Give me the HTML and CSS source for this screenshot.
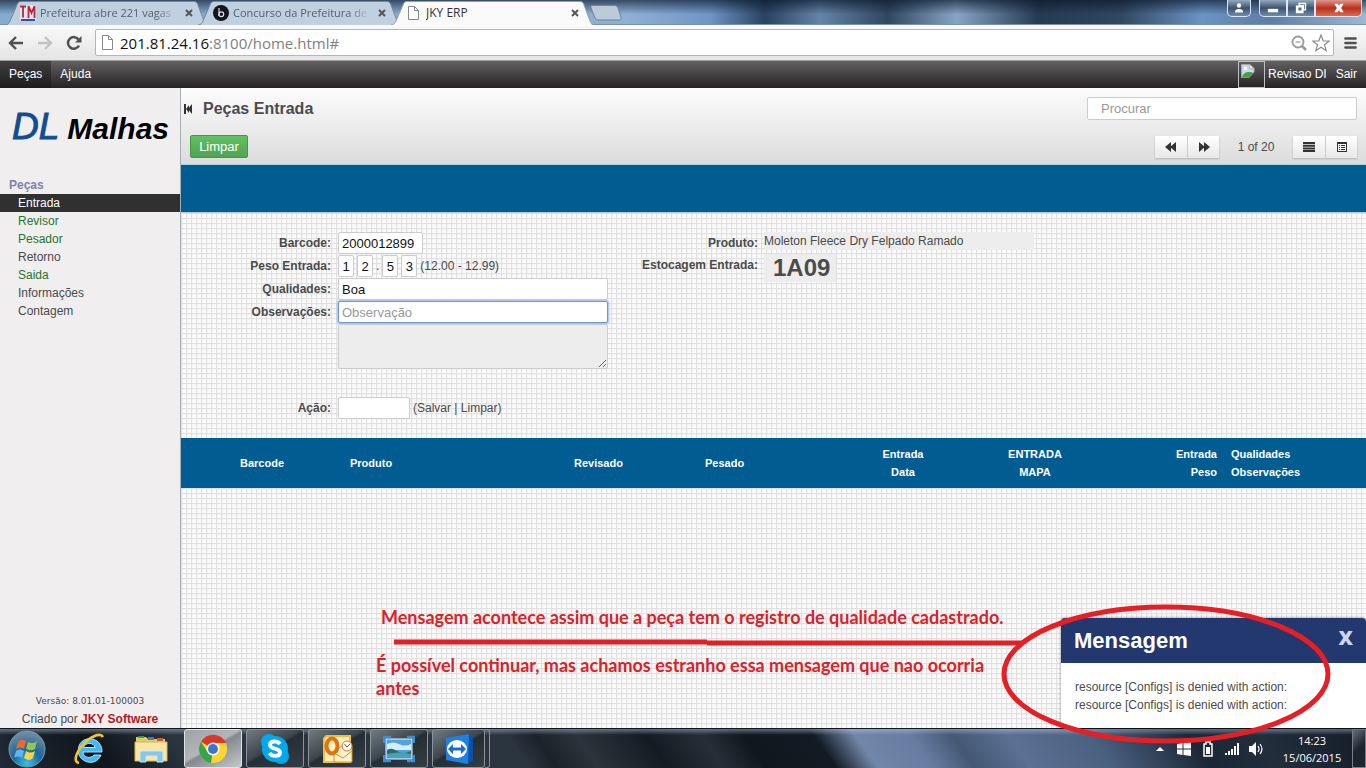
FILE: index.html
```html
<!DOCTYPE html>
<html lang="pt-BR">
<head>
<meta charset="utf-8">
<title>JKY ERP</title>
<link rel="stylesheet" href="styles.css">
</head>
<body>
<header class="tabstrip">
  <div class="tabs">
    <div class="tab">
      <svg class="tab-shape" viewBox="0 0 202 24" preserveAspectRatio="none"><path d="M0 24C3 24 4 22 5 20L12 4C13 1 14 .5 17 .5H188C191 .5 192 1 193 4L199 20C200 22 201 24 202 24"/></svg>
      <svg class="favicon" viewBox="0 0 16 16"><rect width="16" height="16" fill="#dfe6f0"/><path d="M0 1.500H6M3 1.500V12.500M8.500 13V1L11.500 8L14.500 1V13" stroke="#b5283c" stroke-width="1.800" fill="none"/><path d="M1 15H15" stroke="#3c4a9e" stroke-width="2"/></svg>
      <span class="tab-title fade">Prefeitura abre 221 vagas</span>
      <button class="tab-close" aria-label="Fechar guia"><svg viewBox="0 0 8 8"><path d="M1 1L7 7M7 1L1 7"/></svg></button>
    </div>
    <div class="tab">
      <svg class="tab-shape" viewBox="0 0 202 24" preserveAspectRatio="none"><path d="M0 24C3 24 4 22 5 20L12 4C13 1 14 .5 17 .5H188C191 .5 192 1 193 4L199 20C200 22 201 24 202 24"/></svg>
      <svg class="favicon" viewBox="0 0 16 16"><circle cx="8" cy="8" r="8" fill="#11151c"/><path d="M6 3V11" stroke="#dde" stroke-width="1.200"/><circle cx="8.300" cy="9.200" r="2.400" stroke="#dde" stroke-width="1.200" fill="none"/></svg>
      <span class="tab-title fade">Concurso da Prefeitura de</span>
      <button class="tab-close" aria-label="Fechar guia"><svg viewBox="0 0 8 8"><path d="M1 1L7 7M7 1L1 7"/></svg></button>
    </div>
    <div class="tab active">
      <svg class="tab-shape" viewBox="0 0 202 24" preserveAspectRatio="none"><path d="M0 24C3 24 4 22 5 20L12 4C13 1 14 .5 17 .5H188C191 .5 192 1 193 4L199 20C200 22 201 24 202 24"/></svg>
      <svg class="favicon" viewBox="0 0 16 16"><path d="M2.500 1.500H8.500L12.500 5.500V14.500H2.500ZM8.500 1.500V5.500H12.500" fill="#fff" stroke="#888"/></svg>
      <span class="tab-title">JKY ERP</span>
      <button class="tab-close" aria-label="Fechar guia"><svg viewBox="0 0 8 8"><path d="M1 1L7 7M7 1L1 7"/></svg></button>
    </div>
    <button class="new-tab" aria-label="Nova guia"><svg viewBox="0 0 32 16"><path d="M3 .5H24C26 .5 27 1 28 3L31 12C31.500 14 31 15 29 15H9C7 15 6 14.500 5 13L1 3C.5 1 1 .5 3 .5Z" fill="#bccbda" stroke="#6f8299"/></svg></button>
  </div>
  <div class="window-buttons">
    <button class="win-btn user" aria-label="Usuário"><svg viewBox="0 0 12 12"><circle cx="6" cy="3.500" r="2.200"/><path d="M2 10.500C2 7.500 4 7 6 7S10 7.500 10 10.500Z"/></svg></button>
    <div class="win-group">
      <button class="win-btn" aria-label="Minimizar"><svg viewBox="0 0 14 14"><rect x="1" y="8" width="12" height="4"/></svg></button>
      <button class="win-btn" aria-label="Restaurar"><svg viewBox="0 0 14 14"><path d="M4 1H13V10H10V13H1V4H4Z"/><path d="M4 6.500H7.500V10H4ZM5.500 2.500H11.500V8.500H10.500V3.500H5.500Z" fill="#566b88"/></svg></button>
      <button class="win-btn close" aria-label="Fechar"><svg viewBox="0 0 14 14"><path d="M1.500 2H5.500L7 4.500L8.500 2H12.500L9.500 7L12.500 12H8.500L7 9.500L5.500 12H1.500L4.500 7Z"/></svg></button>
    </div>
  </div>
</header>

<div class="toolbar">
  <button class="tool" aria-label="Voltar"><svg viewBox="0 0 16 16"><path d="M15 8H2M8 2L2 8L8 14" fill="none" stroke="#505050" stroke-width="2.400"/></svg></button>
  <button class="tool" aria-label="Avançar"><svg viewBox="0 0 16 16"><path d="M1 8H14M8 2L14 8L8 14" fill="none" stroke="#c3c3c3" stroke-width="2.400"/></svg></button>
  <button class="tool" aria-label="Recarregar"><svg viewBox="0 0 16 16"><path d="M13 10.500A5.800 5.800 0 1 1 12.500 4.500" fill="none" stroke="#505050" stroke-width="2.500"/><path d="M15.500 1V7.500H9Z" fill="#505050"/></svg></button>
  <div class="omnibox">
    <svg class="page-icon" viewBox="0 0 16 16"><path d="M2.500 .5H8.500L12.500 4.500V14.500H2.500ZM8.500 .5V4.500H12.500" fill="#fff" stroke="#888"/></svg>
    <div class="url"><span class="host">201.81.24.16</span>:8100/home.html#</div>
    <svg class="omni-icon" viewBox="0 0 16 16"><circle cx="7" cy="7" r="5.500" fill="none" stroke="#999" stroke-width="1.800"/><path d="M11 11L15 15" stroke="#999" stroke-width="2.500"/><path d="M4.500 7H9.500" stroke="#999" stroke-width="1.200"/></svg>
    <svg class="omni-star" viewBox="0 0 18 18"><path d="M9 1L11.200 6.800L17.300 7L12.500 10.800L14.200 16.700L9 13.300L3.800 16.700L5.500 10.800L.7 7L6.800 6.800Z" fill="#fff" stroke="#8b8b8b" stroke-width="1.200"/></svg>
  </div>
  <button class="menu" aria-label="Menu"><svg viewBox="0 0 14 14"><path d="M2 2.500H12M2 7H12M2 11.500H12" stroke="#505050" stroke-width="2.700" stroke-linecap="round"/></svg></button>
</div>

<nav class="topnav">
  <a class="topnav-item current" href="#">Peças</a>
  <a class="topnav-item" href="#">Ajuda</a>
  <div class="user-area">
    <span class="avatar"><svg viewBox="0 0 16 16"><path d="M.5 .5H10L15 5.500V9L9 15.500H.5Z" fill="#c5d9f2" stroke="#a9a9a9"/><path d="M10 .5V5.500H15Z" fill="#fff" stroke="#a9a9a9"/><circle cx="5" cy="5" r="2" fill="#fff"/><path d="M1 15C3 9 8 8 14 10L9 15.500Z" fill="#4b9c3c"/></svg></span>
    <a href="#">Revisao DI</a>
    <a href="#">Sair</a>
  </div>
</nav>

<div class="app">
  <aside class="sidebar">
    <div class="logo"><span class="logo-dl">DL</span><span class="logo-name">Malhas</span></div>
    <h2 class="side-title">Peças</h2>
    <ul class="side-menu">
      <li><a class="selected" href="#">Entrada</a></li>
      <li><a class="green" href="#">Revisor</a></li>
      <li><a class="green" href="#">Pesador</a></li>
      <li><a href="#">Retorno</a></li>
      <li><a class="green" href="#">Saida</a></li>
      <li><a href="#">Informações</a></li>
      <li><a href="#">Contagem</a></li>
    </ul>
    <div class="side-footer">
      <div class="version">Versão: 8.01.01-100003</div>
      <div>Criado por <a href="#">JKY Software</a></div>
    </div>
  </aside>

  <main class="content">
    <section class="page-head">
      <div class="head-row">
        <svg class="collapse" viewBox="0 0 8 10"><path d="M0 0H2V10H0ZM2 5L5 1V9ZM4 5L8 0V10Z" fill="#333"/></svg>
        <h1>Peças Entrada</h1>
        <input class="search" type="text" placeholder="Procurar" aria-label="Procurar">
      </div>
      <div class="head-row second">
        <button class="btn-clear">Limpar</button>
        <div class="pager">
          <div class="btn-group">
            <button aria-label="Anterior"><svg viewBox="0 0 12 10"><path d="M6 0V10L0 5ZM11 0V10L5 5Z"/></svg></button>
            <button aria-label="Próximo"><svg viewBox="0 0 12 10"><path d="M1 0V10L7 5ZM6 0V10L12 5Z"/></svg></button>
          </div>
          <span class="count">1 of 20</span>
          <div class="btn-group">
            <button aria-label="Lista"><svg viewBox="0 0 12 10"><path d="M0 0H12V2H0ZM0 2.700H12V4.700H0ZM0 5.400H12V7.400H0ZM0 8H12V10H0Z"/></svg></button>
            <button aria-label="Formulário"><svg viewBox="0 0 12 10"><path d="M1 0H11V10H1ZM2 2V9H10V2Z" fill-rule="evenodd"/><path d="M3 3H4V4H3ZM5 3H9V4H5ZM3 5H4V6H3ZM5 5H9V6H5ZM3 7H4V8H3ZM5 7H9V8H5Z"/></svg></button>
          </div>
        </div>
      </div>
    </section>
    <div class="band"></div>

    <form class="entry">
      <div class="fields">
        <label for="barcode">Barcode:</label>
        <div class="field"><input id="barcode" class="w-code" type="text" value="2000012899"></div>
        <label for="peso">Peso Entrada:</label>
        <div class="field digits"><input id="peso" type="text" value="1"><input type="text" value="2" aria-label="Peso, unidade"><span>.</span><input type="text" value="5" aria-label="Peso, décimo"><input type="text" value="3" aria-label="Peso, centésimo"><span>(12.00 - 12.99)</span></div>
        <label for="qualidades">Qualidades:</label>
        <div class="field"><input id="qualidades" class="w-full" type="text" value="Boa"></div>
        <label for="obs">Observações:</label>
        <div class="field"><input id="obs" class="w-full focused" type="text" placeholder="Observação"></div>
        <textarea class="notes" readonly aria-label="Histórico de observações"></textarea>
        <label class="action" for="acao">Ação:</label>
        <div class="field action"><input id="acao" class="w-action" type="text"><span>(Salvar | Limpar)</span></div>
      </div>
      <div class="info">
        <span class="info-label">Produto:</span>
        <output class="product">Moleton Fleece Dry Felpado Ramado</output>
        <span class="info-label">Estocagem Entrada:</span>
        <output class="storage">1A09</output>
      </div>
    </form>

    <table class="grid">
      <colgroup><col class="c-pad"><col class="c-code"><col class="c-product"><col class="c-rev"><col class="c-pes"><col class="c-date"><col class="c-date"><col class="c-weight"><col></colgroup>
      <thead>
        <tr>
          <td></td>
          <th>Barcode</th>
          <th>Produto</th>
          <th>Revisado</th>
          <th>Pesado</th>
          <th class="center">Entrada<br>Data</th>
          <th class="center">ENTRADA<br>MAPA</th>
          <th class="right">Entrada<br>Peso</th>
          <th>Qualidades<br>Observações</th>
        </tr>
      </thead>
    </table>
  </main>

  <section class="message">
    <header><h2>Mensagem</h2><button aria-label="Fechar mensagem">X</button></header>
    <p>resource [Configs] is denied with action:<br>resource [Configs] is denied with action:</p>
  </section>

  <p class="note note-top">Mensagem acontece assim que a peça tem o registro de qualidade cadastrado.</p>
  <p class="note note-bottom">É possível continuar, mas achamos estranho essa mensagem que nao ocorria antes</p>
  <svg class="marker" viewBox="0 0 946 146"><path d="M4 42H317M317 43H632" /><ellipse cx="776" cy="74" rx="162" ry="67"/></svg>
</div>

<footer class="taskbar">
  <button class="start" aria-label="Iniciar"><svg viewBox="0 0 38 38">
    <defs><radialGradient id="orb" cx=".5" cy=".9" r=".9"><stop offset="0" stop-color="#3cc0ee"/><stop offset=".45" stop-color="#1c6799"/><stop offset="1" stop-color="#7690a6"/></radialGradient></defs>
    <circle cx="19" cy="19" r="18" fill="url(#orb)" stroke="#8097a8"/>
    <path d="M10 12C13 9 16 10 18 11L16 19C13 17 11 17 8 19Z" fill="#ed6830"/><path d="M20 12C23 13 26 14 29 11L27 19C24 21 21 20 18 19Z" fill="#98c545"/><path d="M8 21C11 19 13 19 16 21L14 28C11 26 9 26 6 28Z" fill="#62b6ec"/><path d="M18 21C21 23 24 23 27 21L25 28C22 31 19 30 16 28Z" fill="#ffd147"/></svg></button>
  <button class="pin" aria-label="Internet Explorer"><svg viewBox="0 0 32 32"><path d="M29 19H10C10 25 18 26 21 22H28C25 29 18 31 12 28C6 25 4 19 6 13C9 5 18 4 24 8C28 11 29 15 29 19ZM10.500 14.500H22C21 9 12 9 10.500 14.500Z" fill="#46b7f0" stroke="#a7e4ff"/><path d="M6 30C0 29 3 20 9 13C16 4 27 -1 30 4" fill="none" stroke="#f4c42e" stroke-width="2.600"/></svg></button>
  <button class="pin" aria-label="Explorador"><svg viewBox="0 0 34 32"><path d="M2 4H12L14 6H31V28H2Z" fill="#e4c868"/><path d="M4 3H10V5H4Z" fill="#2b9d57"/><path d="M14 4H20V7H14Z" fill="#3b7cc3"/><path d="M23 5H29V8H23Z" fill="#cb5a3a"/><path d="M1 9H33V28H1Z" fill="#f8e7a3" stroke="#d4b65b"/><path d="M6 29V19Q6 18 8 18H27Q29 18 29 19V29H23V23H12V29Z" fill="#8ac7e6" stroke="#c3e8f8"/></svg></button>
  <button class="task running" aria-label="Chrome"><svg viewBox="0 0 32 32"><circle cx="16" cy="16" r="14" fill="#fcd734"/><path d="M16 16L4 8.800A14 14 0 0 1 29 10H16Z" fill="#d9392b"/><path d="M16 16L14 30A14 14 0 0 1 4 8.800L10.500 19Q12 22 16 22Z" fill="#37a34a"/><circle cx="16" cy="16" r="6.500" fill="#fff"/><circle cx="16" cy="16" r="5" fill="#3b78cd"/></svg></button>
  <button class="task" aria-label="Skype"><svg viewBox="0 0 32 32"><circle cx="16" cy="16" r="13" fill="#00a9ec"/><circle cx="10" cy="9" r="8" fill="#00a9ec"/><circle cx="22" cy="23" r="8" fill="#00a9ec"/><path d="M21 11C18 7 11 8 11 12C11 17 21 14 21 19.500C21 24 13 24 10.500 20" fill="none" stroke="#fff" stroke-width="3.800"/></svg></button>
  <button class="task" aria-label="Outlook"><svg viewBox="0 0 32 32"><path d="M5 2H30V30H2V5Z" fill="#f5bd3e"/><path d="M6 4H28V28H4V6Z" fill="#fff1bd"/><path d="M13 19L21 13H31V29H13Z" fill="#fff3cf" stroke="#d9901a"/><path d="M13 20L22 25L31 18" fill="none" stroke="#d9901a"/><ellipse cx="11" cy="13" rx="5.500" ry="7.500" fill="none" stroke="#db7414" stroke-width="4"/><circle cx="26" cy="13" r="5" fill="#fff" stroke="#cf731c"/><path d="M23.500 11L26 14L29 11" fill="none" stroke="#b43c17"/></svg></button>
  <button class="task" aria-label="Imagens"><svg viewBox="0 0 32 28"><rect x="3" y="4" width="26" height="20" fill="#4da3e4" stroke="#e9f7ff"/><path d="M4 9Q10 6 16 9T28 9V15H4Z" fill="#d5edfb"/><path d="M4 15Q8 12 14 16T28 16V23H4Z" fill="#2c6b60"/><path d="M4 19Q16 16 28 19V23H4Z" fill="#4ba0b5"/><path d="M1 8V2H8M24 2H31V8M31 20V26H24M8 26H1V20" fill="none" stroke="#3c8ed4" stroke-width="2.500"/></svg></button>
  <button class="task narrow" aria-label="TeamViewer"><svg viewBox="0 0 32 32"><path d="M3 5L26 1L30 4V27L24 31L3 27Z" fill="#2080de"/><path d="M26 1L30 4V27L25 31Z" fill="#0752a7"/><ellipse cx="14" cy="16" rx="10" ry="9" fill="#fff"/><path d="M5 16L10 11V14.500H18V11L23 16L18 21V17.500H10V21Z" fill="#176bd0"/></svg></button>
  <span class="stack"></span>
  <div class="tray">
    <svg class="arrow" viewBox="0 0 8 4"><path d="M0 4L4 0L8 4Z" fill="#fff"/></svg>
    <svg viewBox="0 0 16 16"><path d="M1 3L6.500 2V7.500H1ZM7.500 2L15 1V7.500H7.500ZM1 8.500H6.500V14L1 13ZM7.500 8.500H15V15L7.500 14Z" fill="#fff"/></svg>
    <svg viewBox="0 0 16 16"><path d="M6 1H10V3H12V15H4V3H6Z" fill="none" stroke="#fff" stroke-width="1.500"/><path d="M6 6H10V13H6Z" fill="#fff"/></svg>
    <svg viewBox="0 0 16 16"><path d="M1 12H3V14H1ZM4 10H6V14H4ZM7 8H9V14H7ZM10 5H12V14H10ZM13 2H15V14H13Z" fill="#fff"/></svg>
    <svg viewBox="0 0 16 16"><path d="M1 5H4L8 1V15L4 11H1Z" fill="#fff"/><path d="M10 5Q12 8 10 11M12 3Q16 8 12 13" fill="none" stroke="#fff" stroke-width="1.200"/></svg>
    <time>14:23<br>15/06/2015</time>
    <button class="show-desktop" aria-label="Mostrar área de trabalho"></button>
  </div>
</footer>
</body>
</html>
```
FILE: styles.css
```css
* { box-sizing: border-box; }

body {
  margin: 0;
  min-height: 100vh;
  display: flex;
  flex-direction: column;
  font: 12px/18px "Liberation Sans", Arial, sans-serif;
  color: #4b4b4b;
  background: #f0eeef;
}

h1, h2, p, ul { margin: 0; padding: 0; }
a { color: inherit; text-decoration: none; }
button { padding: 0; border: 0; background: none; font: inherit; color: inherit; }
svg { display: block; flex: none; }

/* Tab strip */
.tabstrip {
  display: flex;
  justify-content: space-between;
  align-items: flex-start;
  height: 25px;
  padding: 0 4px 0 5px;
  background:
    linear-gradient(180deg, rgba(8, 20, 40, .65), rgba(8, 20, 40, 0) 60%),
    linear-gradient(90deg, #84abd0 0, #8fb0d4 46%, #6e95c4 52%, #29425f 56%, #6484a8 60%, #30475f 65%, #87a5c4 70%, #263a52 76%, #31475f 82%, #6a94c4 88%, #5d7ea6 93%, #9cb8d4 100%);
  border-bottom: 1px solid #7e93ab;
}
.tabs { display: flex; align-items: flex-end; height: 25px; }
.tab {
  position: relative;
  display: flex;
  align-items: center;
  width: 202px;
  height: 24px;
  padding: 0 14px 0 15px;
  font: 12px/18px "Open Sans", "Noto Sans", sans-serif;
  color: #55606c;
}
.tab + .tab { margin-left: -9px; }
.tab-shape { position: absolute; inset: 0; width: 100%; height: 100%; }
.tab-shape path { fill: #c0d0e1; stroke: #74879c; }
.tab.active { z-index: 1; color: #333; }
.tab.active .tab-shape path { fill: #fafafa; stroke: #93a0ad; }
.favicon, .tab-title, .tab-close { position: relative; }
.favicon { width: 16px; height: 16px; margin-right: 4px; }
.tab-title { flex: 1; overflow: hidden; white-space: nowrap; font-size: 11px; }
.active .tab-title { font-size: 12px; }
.tab-title.fade { -webkit-mask-image: linear-gradient(90deg, #000 85%, transparent); mask-image: linear-gradient(90deg, #000 85%, transparent); }
.tab-close { margin-left: 8px; }
.tab-close svg { width: 8px; height: 8px; stroke: #555; stroke-width: 2; }
.new-tab { align-self: center; margin-left: -3px; }
.new-tab svg { width: 32px; height: 16px; }

.window-buttons { display: flex; gap: 8px; }
.win-group { display: flex; }
.win-btn {
  display: flex;
  align-items: center;
  justify-content: center;
  width: 28px;
  height: 17px;
  border: 1px solid #dbe6f1;
  border-top: 0;
  background: linear-gradient(#93a9bf, #3e536d 50%, #6e8cad);
  fill: #fff;
}
.win-btn.user { width: 24px; border-radius: 0 0 5px 5px; }
.win-btn svg { width: 12px; height: 12px; }
.win-group .win-btn:first-child { border-radius: 0 0 0 5px; }
.win-btn.close { width: 47px; border-radius: 0 0 5px 0; background: linear-gradient(#dd978c, #b9301b 50%, #dc6a50); }

/* Browser toolbar */
.toolbar {
  display: flex;
  align-items: center;
  height: 36px;
  padding: 0 8px 0 8px;
  background: linear-gradient(#fafafa, #e4e4e4);
  border-bottom: 1px solid #a0a0a0;
}
.tool { width: 29px; }
.tool svg { width: 16px; height: 16px; }
.omnibox {
  flex: 1;
  display: flex;
  align-items: center;
  height: 27px;
  margin-right: 9px;
  padding: 0 3px 0 4px;
  background: #fff;
  border: 1px solid #b5b5b5;
  border-radius: 2px;
}
.page-icon { width: 16px; height: 16px; margin-right: 4px; }
.url { flex: 1; font: 15px/24px "Open Sans", "Noto Sans", sans-serif; color: #808080; }
.host { color: #111; }
.omni-icon { width: 16px; height: 16px; margin-right: 5px; }
.omni-star { width: 18px; height: 18px; }
.menu svg { width: 15px; height: 14px; }

/* Application bar */
.topnav {
  display: flex;
  height: 27px;
  background: linear-gradient(#636060, #252324);
  color: #fff;
  line-height: 26px;
}
.topnav-item { padding: 0 9px; }
.topnav-item.current { background: linear-gradient(#413f40, #1d1c1d); }
.user-area { display: flex; gap: 9px; margin-left: auto; padding-right: 9px; }
.avatar { width: 27px; height: 27px; margin-right: -6px; padding: 2px; border: 1px solid #c0c0c0; }
.avatar svg { width: 14px; height: 14px; }

/* Page frame */
.app { position: relative; flex: 1; display: flex; }
.sidebar {
  flex: none;
  display: flex;
  flex-direction: column;
  width: 181px;
  border-right: 1px solid #a5adb5;
}
.logo {
  display: flex;
  align-items: baseline;
  gap: 8px;
  height: 88px;
  padding: 15px 0 0 12px;
  font-family: "Liberation Sans", Arial, sans-serif;
  font-style: italic;
  line-height: 48px;
}
.logo-dl { font-size: 37px; color: #114c95; -webkit-text-stroke: 1px #114c95; }
.logo-name { font-size: 30px; font-weight: bold; color: #000; }
.side-title { padding-left: 9px; font-size: 12px; line-height: 18px; color: #8080ae; }
.side-menu { list-style: none; }
.side-menu a { display: block; padding-left: 18px; }
.side-menu .green { color: #28752b; }
.side-menu .selected { background: #303030; color: #fff; }
.side-footer { margin-top: auto; text-align: center; }
.side-footer a { font-weight: bold; color: #b51a20; }
.version { font: 9px/18px "DejaVu Sans", Verdana, sans-serif; }

.content {
  flex: 1;
  min-width: 0;
  background-color: #fbfbfb;
  background-image:
    linear-gradient(90deg, #e0e0e0 1px, transparent 1px),
    linear-gradient(#e0e0e0 1px, transparent 1px),
    linear-gradient(135deg, #f0f0f0, #fff);
  background-size: 5px 5px;
}
.page-head {
  height: 77px;
  padding: 9px 9px 0 3px;
  background: linear-gradient(#fcfcfc, #dcdcdc);
  border-bottom: 1px solid #a6d3e6;
}
.head-row { display: flex; align-items: center; height: 23px; }
.head-row.second { margin-top: 15px; padding-left: 6px; }
.collapse { width: 8px; height: 10px; margin-right: 11px; }
h1 { font-size: 16px; line-height: 23px; }
.search {
  width: 270px;
  height: 23px;
  margin-left: auto;
  padding: 0 13px;
  border: 1px solid #ccc;
  border-radius: 2px;
  font: 13px/18px "Liberation Sans", Arial, sans-serif;
}
::placeholder { color: #999; opacity: 1; }
.btn-clear {
  width: 58px;
  height: 23px;
  border: 1px solid #499249;
  border-radius: 2px;
  background: linear-gradient(#62c162, #51a351);
  color: #fff;
  font-size: 13px;
}
.pager { display: flex; align-items: center; margin-left: auto; }
.btn-group { display: flex; box-shadow: 0 1px 2px rgba(0, 0, 0, .2); }
.btn-group button {
  display: flex;
  align-items: center;
  justify-content: center;
  width: 32px;
  height: 22px;
  background: linear-gradient(#fff, #e8e8e8);
  fill: #333;
}
.btn-group button + button { border-left: 1px solid #ccc; }
.btn-group svg { width: 12px; height: 10px; }
.count { width: 74px; text-align: center; }
.band { height: 48px; background: #005c91; border-bottom: 1px solid #b9c4cb; }

/* Entry form */
.entry { display: flex; gap: 9px; height: 225px; padding: 19px 0 0; }
.fields { display: grid; grid-template-columns: 150px 270px; grid-auto-rows: max-content; column-gap: 7px; row-gap: 1px; }
.fields label, .info-label { font-weight: bold; text-align: right; line-height: 22px; white-space: nowrap; }
.field { display: flex; align-items: center; gap: 3px; height: 22px; }
.field input, .notes {
  height: 22px;
  padding: 0 3px;
  border: 1px solid #ccc;
  border-radius: 2px;
  background: #fff;
  font: 13px/18px "Liberation Sans", Arial, sans-serif;
  color: #111;
}
.field .w-code { width: 85px; }
.field .w-full { width: 100%; }
.field .w-action { width: 72px; }
.field .focused { border-color: #6f96d6; box-shadow: 0 0 2px 1px #9db9ea; }
.field.digits input { width: 16px; padding: 0; text-align: center; }
.notes { grid-column: 2; width: 100%; height: 45px; background: #ededed; resize: both; }
.action { margin-top: 27px; }
.info { display: grid; grid-template-columns: 141px 270px; grid-template-rows: 22px 28px; column-gap: 6px; }
.product { align-self: start; line-height: 18px; background: #ededed; }
.storage { width: 72px; padding: 0 9px; font-size: 24px; font-weight: bold; line-height: 28px; background: #ededed; }

/* Pieces table */
.grid {
  width: 100%;
  height: 50px;
  table-layout: fixed;
  border-collapse: collapse;
  background: #005c91;
  color: #fff;
  font-size: 11px;
  line-height: 18px;
}
.grid th { padding: 0 7px; text-align: left; }
.grid .center { text-align: center; }
.grid .right { text-align: right; }
.c-pad { width: 52px; }
.c-code { width: 110px; }
.c-product { width: 224px; }
.c-rev { width: 131px; }
.c-pes { width: 139px; }
.c-date { width: 132px; }
.c-weight { width: 123px; }

/* Message popup */
.message {
  position: absolute;
  right: 0;
  bottom: 0;
  width: 305px;
  height: 110px;
  border-radius: 4px 4px 0 0;
  background: #fff;
  box-shadow: 0 0 3px rgba(0, 0, 0, .5);
  overflow: hidden;
}
.message header { display: flex; justify-content: space-between; height: 45px; padding: 0 13px; background: #22386f; }
.message h2 { font-size: 22px; line-height: 45px; color: #fff; }
.message button { font: 800 20px/40px "Open Sans", sans-serif; color: #cdd5ea; height: 40px; }
.message p { padding: 15px 14px; }

/* Annotations */
.note { position: absolute; font: bold 18px/23px Lato, "Open Sans", sans-serif; color: #d8232a; }
.note-top { left: 381px; bottom: 99px; white-space: nowrap; }
.note-bottom { left: 376px; bottom: 28px; width: 630px; }
.marker { position: absolute; right: 30px; bottom: -18px; z-index: 2; width: 946px; height: 146px; pointer-events: none; }
.marker path, .marker ellipse { fill: none; stroke: #e51f26; stroke-width: 5; }

/* Taskbar */
.taskbar {
  display: flex;
  align-items: stretch;
  height: 40px;
  padding-left: 8px;
  border-top: 1px solid #10161c;
  background:
    linear-gradient(rgba(190, 210, 230, .45), transparent 6px),
    linear-gradient(55deg, #202b36 0, #10151b 8%, #2b3540 14%, #2b3540 38%, #1c222a 40%, #2b333b 43%, #141b23 48%, #262f38 52%, #10171f 55%, #121a23 60%, #7186a8 63%, #667da1 67%, #445874 70%, #5a7194 74%, #4a607f 80%, #1c2735 87%, #222e3c 92%, #141c26 100%);
}
.start svg { width: 38px; height: 38px; }
.start { width: 38px; margin-right: 12px; }
.pin { display: flex; align-items: center; justify-content: center; width: 62px; }
.pin svg { width: 34px; height: 32px; }
.task {
  display: flex;
  align-items: center;
  justify-content: center;
  width: 58px;
  margin-right: 4px;
  border: 1px solid #8b949c;
  border-radius: 3px;
  background: linear-gradient(150deg, #737b82, #3d454d 45%, #252d35 50%, #353d45);
}
.pin + .task { margin-left: 2px; }
.task.running { background: linear-gradient(150deg, #9ea2a6, #b3b6b9 45%, #85898d 50%, #c5c8ca); border-color: #e0e3e5; }
.task svg { width: 32px; height: 32px; }
.task.narrow { width: 53px; margin-right: 0; }
.stack { width: 5px; border: 1px solid #8b949c; border-left: 0; border-radius: 0 3px 3px 0; }
.tray { display: flex; align-items: center; gap: 8px; margin-left: auto; color: #fff; }
.tray svg { width: 16px; height: 16px; }
.tray .arrow { width: 8px; height: 4px; margin-right: 4px; }
.tray time { width: 80px; text-align: center; font: 11px/17px "Open Sans", "Noto Sans", sans-serif; }
.show-desktop { align-self: stretch; width: 14px; margin-left: -8px; border: 1px solid #76818d; background: linear-gradient(135deg, #66707b, #1c242d 50%); }
```
